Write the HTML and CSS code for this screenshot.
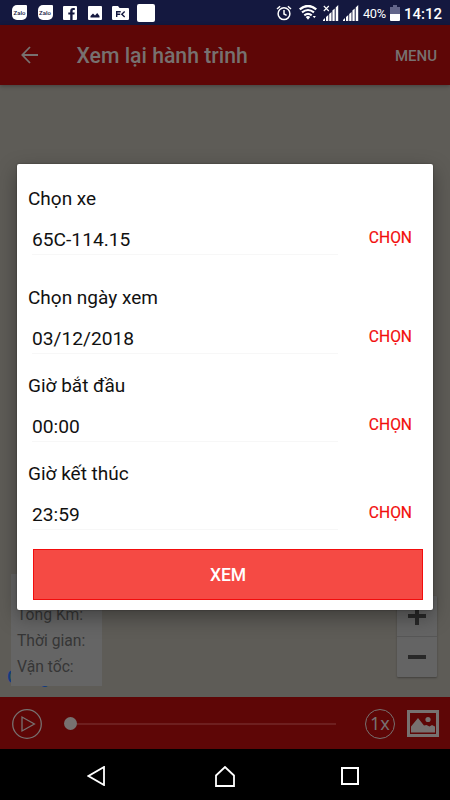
FILE: index.html
```html
<!DOCTYPE html>
<html lang="vi">
<head>
    <meta charset="UTF-8">
    <meta name="viewport" content="width=device-width, initial-scale=1.0">
    <title>Xem lại hành trình</title>
    <link rel="stylesheet" href="styles.css">
</head>
<body>
    <div class="status-bar">
        <div class="notifications">
            <span class="zalo">Zalo</span>
            <span class="zalo">Zalo</span>
            <svg class="facebook" width="14" height="14" viewBox="0 0 14 14">
                <rect width="14" height="14" rx="1" fill="#fff"/>
                <path d="M7.2 14V8.6H5.3V6.4h1.9V5c0-2 1-3 3-3h1.6v2.1h-1.1c-.8 0-1.1.3-1.1 1v1.3h2.1l-.3 2.2H9.6V14z" fill="#14183f"/>
            </svg>
            <svg class="gallery" width="14" height="14" viewBox="0 0 14 14">
                <rect width="14" height="14" rx="1" fill="#fff"/>
                <path d="M2.5 11.5V10L5 7.5l2 2L9.2 7l2.3 3v1.5z" fill="#14183f"/>
            </svg>
            <svg class="folder" width="17" height="14" viewBox="0 0 17 14">
                <path d="M0 1.2Q0 0 1.2 0H6l1.6 2H16q1 0 1 1v9.8q0 1.2-1.2 1.2H1.2Q0 14 0 12.8z" fill="#fff"/>
                <path d="M4.7 11V5.7h4M4.7 8.2h3.5M12.7 5.5L9.8 8.2l2.9 2.8" fill="none" stroke="#14183f" stroke-width="1.4"/>
            </svg>
            <span class="blank-app"></span>
        </div>
        <div class="system">
            <svg class="alarm" width="16" height="16" viewBox="0 0 16 16" fill="none" stroke="#fff" stroke-width="1.5">
                <circle cx="8" cy="8.7" r="5.9"/>
                <path d="M8 5v4l2.6 1.4M1 4l3.1-2.7M15 4l-3.1-2.7"/>
            </svg>
            <svg class="wifi" width="18" height="15" viewBox="0 0 18 15" fill="none" stroke="#fff">
                <path d="M.7 4.4q8.3-6.8 16.6 0" stroke-width="2.4"/>
                <path d="M3 7.4q6-4.8 12 0M5.3 10.3q3.7-2.8 7.4 0" stroke-width="2.1"/>
                <path d="M9 14.7l-2.3-2.8q2.3-1.6 4.6 0z" fill="#fff" stroke="none"/>
                <path d="M13.7 11h3.2l-1.6 2.2z" fill="#fff" stroke="none"/>
            </svg>
            <svg class="signal" width="16" height="16" viewBox="0 0 16 16" fill="#fff">
                <path d="M0 15l2-2v3H0zM3 12l2.3-2v6H3zM6.2 9l2.3-2v9H6.2zM9.4 5.5l2.3-2V16H9.4zM12.7 2.500L15.200 0v16h-2.500z"/>
                <path d="M.8 1l5 5m0-5l-5 5" stroke="#fff" stroke-width="1.1"/>
            </svg>
            <svg class="signal-full" width="16" height="16" viewBox="0 0 16 16" fill="#fff">
                <path d="M0 15l2-2v3H0zM3 12l2.3-2v6H3zM6.2 9l2.3-2v9H6.2zM9.4 5.5l2.3-2V16H9.4zM12.7 2.500L15.200 0v16h-2.500z"/>
            </svg>
            <span class="percent">40%</span>
            <svg class="battery" width="10" height="16" viewBox="0 0 10 16">
                <path d="M3 0h4v2h3v7H0V2h3z" fill="#62658a"/>
                <path d="M0 9h10v6q0 1-1 1H1q-1 0-1-1z" fill="#fff"/>
            </svg>
            <span class="clock">14:12</span>
        </div>
    </div>

    <header class="app-bar">
        <svg class="back" width="18" height="18" viewBox="0 0 18 18" fill="none" stroke="#777170" stroke-width="1.8">
            <path d="M17 9H1.5M9 1L1.3 9 9 17"/>
        </svg>
        <h1>Xem lại hành trình</h1>
        <span class="menu">MENU</span>
    </header>

    <main class="map">
        <span class="map-logo">Google</span>
        <div class="stats">
            <p>Tổng Km:</p>
            <p>Thời gian:</p>
            <p>Vận tốc:</p>
        </div>
        <div class="zoom">
            <span class="zoom-in"></span>
            <span class="zoom-out"></span>
        </div>
    </main>

    <div class="player">
        <svg width="30" height="30" viewBox="0 0 30 30" fill="none" stroke="#777170" stroke-width="1.3">
            <circle cx="15" cy="15" r="14.3"/>
            <path d="M10 8v14l12.4-7z"/>
        </svg>
        <div class="slider">
            <span class="thumb"></span>
        </div>
        <span class="speed">1x</span>
        <svg width="32" height="27" viewBox="0 0 32 27">
            <path d="M0 0h32v27H0zM3 3v21h26V3z" fill="#777170" fill-rule="evenodd"/>
            <path d="M4 22.5V16.5l7-8.5 6 7.5 2.5-.5 3 1.5 2.5-1.5 3 1.5v6z" fill="#777170"/>
            <circle cx="21" cy="9.5" r="2.6" fill="#777170"/>
        </svg>
    </div>

    <nav class="nav-bar">
        <svg width="18" height="20" viewBox="0 0 18 20" fill="none" stroke="#fff" stroke-width="1.8">
            <path d="M17 1v18L1.5 10z"/>
        </svg>
        <svg class="home" width="20" height="21" viewBox="0 0 20 21" fill="none" stroke="#fff" stroke-width="1.8">
            <path d="M1 20V9.5L10 1l9 8.5V20z"/>
        </svg>
        <svg width="18" height="18" viewBox="0 0 18 18" fill="none" stroke="#fff" stroke-width="2">
            <rect x="1" y="1" width="16" height="16"/>
        </svg>
    </nav>

    <div class="dialog">
        <div class="group vehicle">
            <label>Chọn xe</label>
            <div class="entry">
                <span class="value">65C-114.15</span>
                <span class="pick">CHỌN</span>
            </div>
        </div>
        <div class="group">
            <label>Chọn ngày xem</label>
            <div class="entry">
                <span class="value">03/12/2018</span>
                <span class="pick">CHỌN</span>
            </div>
        </div>
        <div class="group">
            <label>Giờ bắt đầu</label>
            <div class="entry">
                <span class="value">00:00</span>
                <span class="pick">CHỌN</span>
            </div>
        </div>
        <div class="group">
            <label>Giờ kết thúc</label>
            <div class="entry">
                <span class="value">23:59</span>
                <span class="pick">CHỌN</span>
            </div>
        </div>
        <button class="submit">XEM</button>
    </div>
</body>
</html>
```
FILE: styles.css
```css
* {
    box-sizing: border-box;
}

body {
    margin: 0;
    width: 450px;
    height: 800px;
    position: relative;
    overflow: hidden;
    display: flex;
    flex-direction: column;
    font-family: Roboto, "Noto Sans", sans-serif;
    background: #000;
}

svg {
    display: block;
    flex: none;
}

/* Status bar */
.status-bar {
    height: 25px;
    background: #14183f;
    display: flex;
    justify-content: space-between;
    padding: 0 8px 0 12px;
    color: #fff;
}

.notifications,
.system {
    display: flex;
    align-items: center;
}

.zalo {
    width: 15px;
    height: 15px;
    margin-right: 10.5px;
    border-radius: 5px 1px 5px 5px;
    background: #fff;
    color: #14183f;
    font-size: 6px;
    font-weight: 500;
    line-height: 15px;
    text-align: center;
}

.facebook {
    margin-right: 11px;
}

.gallery {
    margin-right: 10px;
}

.blank-app {
    width: 18px;
    height: 18px;
    margin-left: 8px;
    border-radius: 2px;
    background: #fff;
}

.alarm {
    margin-right: 7px;
}

.wifi {
    margin-right: 6px;
}

.signal {
    margin-right: 4px;
}

.signal-full {
    margin-right: 4px;
}

.percent {
    width: 24px;
    font-size: 12.8px;
    letter-spacing: -0.3px;
    margin-right: 3px;
    padding-top: 1px;
}

.clock {
    font-size: 15px;
    font-weight: 500;
    margin-left: 4px;
    padding-top: 2px;
}

/* App bar */
.app-bar {
    height: 60px;
    background: #5e0606;
    color: #777170;
    display: flex;
    align-items: center;
    padding: 0 13px 0 21px;
    z-index: 1;
    box-shadow: 0 1px 4px rgba(0, 0, 0, 0.3);
}

.app-bar h1 {
    flex: 1;
    margin: 1px 0 0 37.5px;
    font-size: 21.2px;
    font-weight: 500;
}

.menu {
    font-size: 15px;
    font-weight: 500;
    padding-top: 1px;
}

/* Map */
.map {
    height: 612px;
    background: #5e5c57;
    position: relative;
}

.map-logo {
    position: absolute;
    left: 7px;
    bottom: 9px;
    color: #143c80;
    font-size: 18px;
    font-weight: 500;
    line-height: 22px;
}

.stats {
    position: absolute;
    left: 11px;
    top: 489px;
    width: 91px;
    height: 112px;
    padding: 28px 6px 0;
    background: #656565;
    color: #363636;
    font-size: 15.7px;
    line-height: 26px;
}

.stats p {
    margin: 0;
}

.zoom {
    position: absolute;
    left: 397px;
    top: 511px;
    width: 40px;
    height: 81px;
    background: #646464;
    border-radius: 1px;
    box-shadow: 0 1px 2px rgba(0, 0, 0, 0.3);
}

.zoom span {
    display: flex;
    align-items: center;
    justify-content: center;
    height: 41px;
}

.zoom .zoom-out {
    height: 39px;
}

.zoom-in {
    border-bottom: 1px solid #575757;
}

.zoom-in::before,
.zoom-out::before {
    content: "";
    width: 18px;
    height: 4px;
    background: #282828;
}

.zoom-in::after {
    content: "";
    width: 4px;
    height: 18px;
    margin-left: -11px;
    margin-right: 7px;
    background: #282828;
}

/* Playback */
.player {
    height: 52px;
    background: #5e0606;
    display: flex;
    align-items: center;
    padding: 1px 11px 0 12px;
}

.slider {
    width: 266px;
    height: 2px;
    margin-left: 28px;
    margin-right: 29px;
    background: #6e1f1f;
    display: flex;
    align-items: center;
}

.thumb {
    width: 13px;
    height: 13px;
    margin-left: -6px;
    border-radius: 50%;
    background: #777170;
}

.speed {
    width: 30px;
    height: 30px;
    margin-right: 12px;
    border: 1.3px solid #777170;
    border-radius: 50%;
    color: #777170;
    font-family: "Noto Sans", sans-serif;
    font-size: 18px;
    line-height: 26px;
    text-align: center;
}

/* Navigation bar */
.nav-bar {
    height: 51px;
    background: #000;
    display: flex;
    align-items: center;
    justify-content: space-between;
    padding: 3px 91px 0 87px;
}

.home {
    margin-left: 4px;
}

/* Dialog */
.dialog {
    position: absolute;
    left: 17px;
    top: 164px;
    z-index: 2;
    width: 416px;
    height: 446px;
    padding: 23px 11px 10px;
    background: #fff;
    border-radius: 2px;
    box-shadow: 0 7px 20px rgba(0, 0, 0, 0.35), 0 0 2px rgba(0, 0, 0, 0.4);
    color: #111;
}

.group {
    height: 68px;
    margin-bottom: 20.3px;
}

.group.vehicle {
    margin-bottom: 30.5px;
}

.group label {
    display: block;
    font-size: 19px;
    line-height: 24.6px;
    height: 24px;
}

.entry {
    display: flex;
    justify-content: space-between;
    padding: 12px 10px 0 4px;
}

.value {
    width: 306px;
    height: 32px;
    border-bottom: 1px solid #f7f7f7;
    font-size: 19.2px;
    line-height: 33px;
}

.pick {
    color: #f20d0d;
    font-size: 15.6px;
    -webkit-text-stroke: 0.2px #f20d0d;
    line-height: 30px;
}

.submit {
    display: block;
    width: 390px;
    height: 51px;
    margin: -1px 0 0 5px;
    padding: 0;
    border: 1px solid #f20d0d;
    background: #f54a44;
    color: #fff;
    font-family: inherit;
    font-size: 17.5px;
    font-weight: 500;
}
```
